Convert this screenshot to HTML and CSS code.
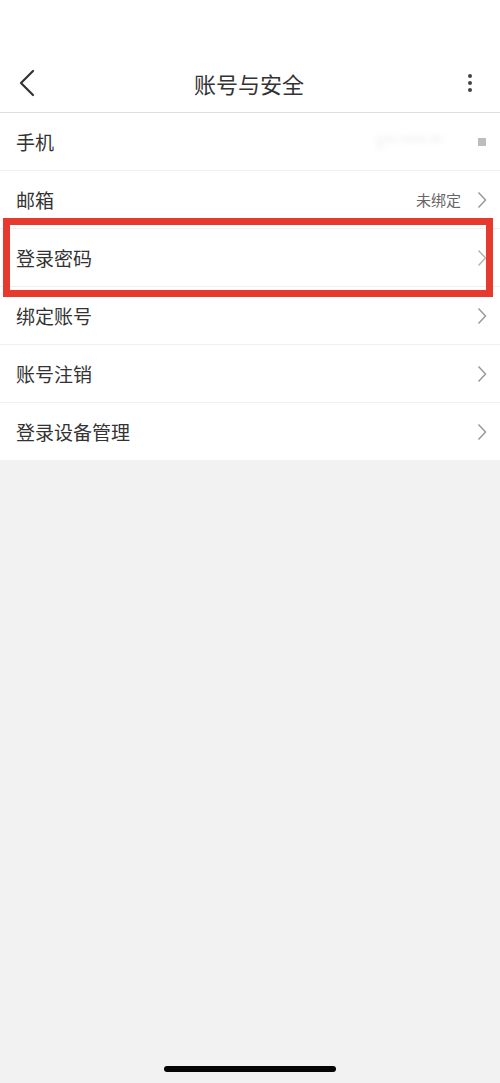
FILE: index.html
```html
<!DOCTYPE html>
<html lang="zh">
<head>
<meta charset="utf-8">
<link rel="stylesheet" href="styles.css">
</head>
<body>
<div class="page">
  <div class="status"></div>
  <div class="nav">
    <div class="back">
      <svg width="18" height="28" viewBox="0 0 18 28"><path d="M15 2 L3 14 L15 26" fill="none" stroke="#333" stroke-width="2.2" stroke-linecap="round" stroke-linejoin="round"/></svg>
    </div>
    <div class="title">账号与安全</div>
    <div class="more">
      <span></span><span></span><span></span>
    </div>
  </div>
  <div class="list">
    <div class="row">
      <div class="label">手机</div>
      <div class="right"><span class="blur">1** **** **</span><span class="sq"></span></div>
    </div>
    <div class="row">
      <div class="label">邮箱</div>
      <div class="right"><span class="value">未绑定</span><svg class="chev" width="10" height="18" viewBox="0 0 10 18"><path d="M1.5 1.5 L8.5 9 L1.5 16.5" fill="none" stroke="#9a9a9a" stroke-width="1.5"/></svg></div>
    </div>
    <div class="row hl">
      <div class="label">登录密码</div>
      <div class="right"><svg class="chev" width="10" height="18" viewBox="0 0 10 18"><path d="M1.5 1.5 L8.5 9 L1.5 16.5" fill="none" stroke="#b5b5b5" stroke-width="1.5"/></svg></div>
      <div class="mark"></div>
    </div>
    <div class="row">
      <div class="label">绑定账号</div>
      <div class="right"><svg class="chev" width="10" height="18" viewBox="0 0 10 18"><path d="M1.5 1.5 L8.5 9 L1.5 16.5" fill="none" stroke="#9a9a9a" stroke-width="1.5"/></svg></div>
    </div>
    <div class="row">
      <div class="label">账号注销</div>
      <div class="right"><svg class="chev" width="10" height="18" viewBox="0 0 10 18"><path d="M1.5 1.5 L8.5 9 L1.5 16.5" fill="none" stroke="#9a9a9a" stroke-width="1.5"/></svg></div>
    </div>
    <div class="row last">
      <div class="label">登录设备管理</div>
      <div class="right"><svg class="chev" width="10" height="18" viewBox="0 0 10 18"><path d="M1.5 1.5 L8.5 9 L1.5 16.5" fill="none" stroke="#9a9a9a" stroke-width="1.5"/></svg></div>
    </div>
  </div>
  <div class="filler">
    <div class="home"></div>
  </div>
</div>
</body>
</html>
```

FILE: styles.css
```css
* { box-sizing: border-box; }
html, body { margin: 0; padding: 0; }
body {
  background: #f2f2f2;
  font-family: "Noto Sans CJK SC", "Noto Sans", sans-serif;
  color: #222;
}
.page {
  width: 500px;
  height: 1083px;
  display: flex;
  flex-direction: column;
}
.status { height: 56px; background: #fff; }
.nav {
  height: 57px;
  background: #fff;
  display: flex;
  align-items: center;
  justify-content: space-between;
  padding: 0 20px 0 18px;
  border-bottom: 1px solid #dedede;
}
.back { width: 30px; display: flex; align-items: center; padding-bottom: 2px; }
.title {
  font-size: 22px;
  color: #333;
  padding-bottom: 2px;
}
.more {
  width: 30px;
  display: flex;
  flex-direction: column;
  align-items: flex-end;
  gap: 3px;
  padding-right: 8px;
  padding-bottom: 2px;
}
.more span { width: 4px; height: 4px; border-radius: 50%; background: #444; }
.list { background: #fff; }
.row {
  position: relative;
  height: 58px;
  display: flex;
  align-items: center;
  justify-content: space-between;
  padding: 0 13px 0 16px;
  border-bottom: 1px solid #f0f0f0;
}
.row.last { border-bottom: none; height: 57px; }
.label { font-size: 19px; color: #333; }
.right { display: flex; align-items: center; gap: 16px; }
.value { font-size: 15px; color: #666; }
.chev { display: block; }
.blur {
  font-size: 14px;
  color: #ddd;
  filter: blur(3px);
  margin-right: 20px;
}
.sq { width: 8px; height: 8px; background: #bdbdbd; margin-right: 1px; }
.mark {
  position: absolute;
  left: 3px;
  right: 7px;
  top: -11px;
  bottom: -11px;
  border: 7px solid #e8392f;
  pointer-events: none;
}
.filler {
  flex: 1;
  background: #f2f2f2;
  display: flex;
  flex-direction: column;
  justify-content: flex-end;
  align-items: center;
  padding-bottom: 11px;
}
.home {
  width: 172px;
  height: 6px;
  border-radius: 3px;
  background: #050505;
}
```
